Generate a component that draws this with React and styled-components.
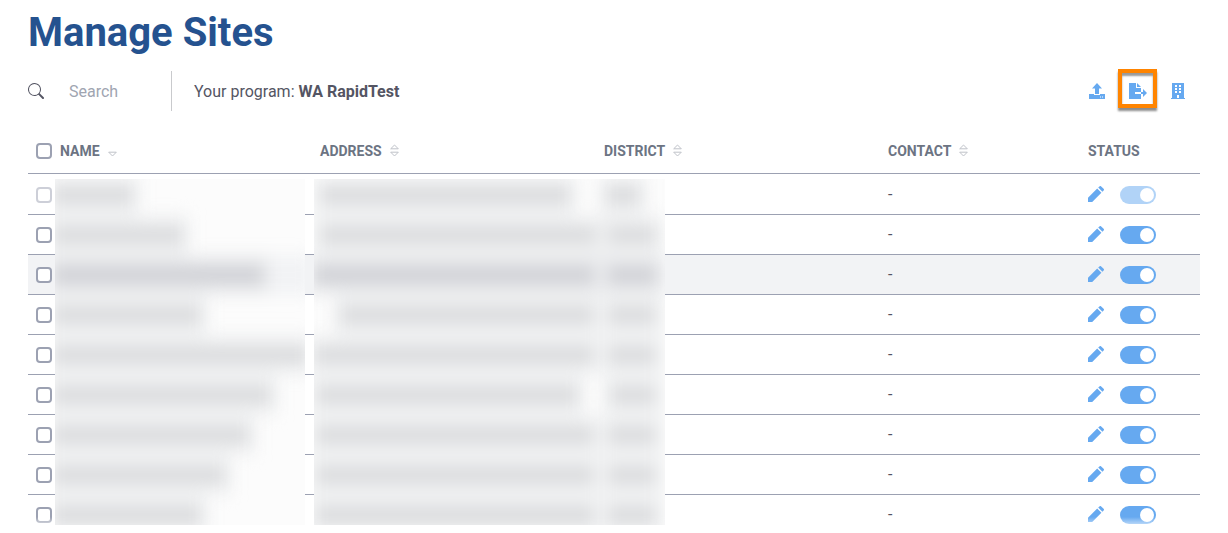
import React from "react";
import styled, { createGlobalStyle, css } from "styled-components";
import { BsSearch } from "react-icons/bs";

const GlobalStyle = createGlobalStyle`
  *, *::before, *::after { box-sizing: border-box; }
  body {
    margin: 0;
    background: #ffffff;
    color: #545563;
    font-family: Roboto, "Liberation Sans", sans-serif;
    font-size: 16px;
  }
`;

const Page = styled.main`
  display: flex;
  flex-direction: column;
  height: 100vh;
  padding: 8px 28px;
`;

const Title = styled.h1`
  margin: 0;
  color: #25528f;
  font-size: 40px;
  font-weight: 700;
  line-height: 50px;
`;

const Toolbar = styled.div`
  display: flex;
  align-items: center;
  height: 40px;
  margin-top: 13px;
`;

const SearchBox = styled.label`
  display: flex;
  align-items: center;
  gap: 25px;
  width: 144px;
  height: 40px;
  border-right: 1px solid #c9cacd;
  svg { flex: none; }
`;

const SearchInput = styled.input`
  min-width: 0;
  width: 80px;
  padding: 0;
  border: 0;
  outline: 0;
  background: transparent;
  color: inherit;
  font: inherit;
  &::placeholder { color: #a0a5b1; opacity: 1; }
`;

const Program = styled.p`
  margin: 0 auto 0 22px;
  padding-top: 2px;
  line-height: 24px;
`;

const Actions = styled.div`
  display: flex;
  align-items: center;
  gap: 24px;
  padding-right: 15px;
`;

const IconButton = styled.button`
  position: relative;
  display: flex;
  padding: 0;
  border: 0;
  background: transparent;
  color: #66a9f0;
  cursor: pointer;
  ${(p) =>
    p.$marked &&
    css`
      &::after {
        content: "";
        position: absolute;
        top: -14px;
        left: -11px;
        width: 39px;
        height: 39px;
        border: 4px solid #ff8400;
        box-shadow: 0 3px 2px rgba(0, 0, 0, 0.45), inset 0 3px 2px rgba(0, 0, 0, 0.4);
      }
    `}
`;

const ListArea = styled.div`
  position: relative;
  flex: 1;
  min-height: 0;
  margin-top: 17px;
  overflow: hidden;
  &::after {
    content: "";
    position: absolute;
    inset: auto 0 0;
    height: 8px;
    background: linear-gradient(rgba(255, 255, 255, 0), rgba(255, 255, 255, 0.6));
    pointer-events: none;
  }
`;

const Table = styled.table`
  width: 100%;
  table-layout: fixed;
  border-collapse: separate;
  border-spacing: 0;
`;

const Col = styled.col`
  width: ${(p) => p.$w}px;
`;

const HeadCell = styled.th`
  height: 46px;
  padding: 0 0 0 8px;
  border-bottom: 1px solid #9ca1b2;
  color: #6c7483;
  font-size: 14px;
  font-weight: 700;
  line-height: 16px;
  text-align: left;
`;

const HeadLabel = styled.span`
  display: flex;
  align-items: center;
  gap: 8px;
`;

const Row = styled.tr`
  background: ${(p) => (p.$active ? "#f2f3f5" : "transparent")};
  &:first-child td { border-top: 1px solid transparent; height: 41px; }
`;

const Cell = styled.td`
  height: 40px;
  padding: 0 0 0 8px;
  border-bottom: 1px solid #9ca1b2;
`;

const Checkbox = styled.input.attrs({ type: "checkbox" })`
  appearance: none;
  display: block;
  width: 16px;
  height: 16px;
  margin: 0;
  border: 2px solid #9ca1b2;
  border-radius: 4px;
  background: #ffffff;
  &:disabled { opacity: 0.5; }
`;

const StatusGroup = styled.div`
  display: flex;
  align-items: flex-start;
  gap: 16px;
`;

const Toggle = styled.input.attrs({ type: "checkbox", role: "switch" })`
  appearance: none;
  display: flex;
  align-items: center;
  width: 36px;
  height: 18px;
  margin: 0;
  padding: 2px;
  border-radius: 9px;
  background: #c9cdd6;
  &::before {
    content: "";
    width: 14px;
    height: 14px;
    border-radius: 50%;
    background: #ffffff;
  }
  &:checked { justify-content: flex-end; background: #66a9f0; }
  &:disabled { opacity: 0.5; }
`;

const Veil = styled.div`
  position: absolute;
  top: 51px;
  bottom: 0;
  left: ${(p) => p.$left}px;
  width: ${(p) => p.$width}px;
  overflow: hidden;
  background: #fcfcfc;
  z-index: 1;
`;

const VeilRows = styled.div`
  filter: blur(8px);
  margin: -4px -8px 0;
`;

const VeilRow = styled.div`
  display: flex;
  height: 40px;
  background: ${(p) => (p.$active ? "#f2f3f5" : "transparent")};
`;

const VeilText = styled.div`
  display: flex;
  align-items: center;
  width: ${(p) => p.$w}px;
  height: 40px;
  margin-left: ${(p) => p.$gap || 0}px;
  padding: 0 6px;
  background: ${(p) => (p.$active ? "#e9eaec" : "#eff0f1")};
  &::before {
    content: "";
    flex: 1;
    height: 16px;
    border-radius: 4px;
    background: ${(p) => (p.$active ? "#cfd0d5" : "#dadbdd")};
  }
`;

const sites = [
  { name: 92, address: [8, 262], district: [24, 46], disabled: true },
  { name: 142, address: [8, 288], district: [0, 60] },
  { name: 222, address: [2, 292], district: [2, 60], active: true },
  { name: 160, address: [28, 266], district: [2, 60] },
  { name: 270, address: [2, 292], district: [2, 60] },
  { name: 230, address: [4, 274], district: [20, 58] },
  { name: 208, address: [4, 290], district: [2, 60] },
  { name: 184, address: [4, 290], district: [2, 60] },
  { name: 160, address: [4, 290], district: [2, 60] },
];

const SortIcon = ({ down }) => (
  <svg width="9" height="13" viewBox="0 0 9 13" fill="none" stroke="#bfc2c9" strokeLinejoin="round" aria-hidden="true">
    {!down && <path d="M.7 4.8 4.5 1 8.3 4.8Z" />}
    <path d="M.7 8.2h7.6L4.5 12Z" />
  </svg>
);

const PencilIcon = () => (
  <svg width="16" height="16" viewBox="0 0 16 16" fill="currentColor" aria-hidden="true">
    <path d="M0 16v-4.2L9.2 2.6l4.2 4.2L4.2 16ZM10.2 1.6l1.2-1.2a1.3 1.3 0 0 1 1.8 0l2.4 2.4a1.3 1.3 0 0 1 0 1.8l-1.2 1.2Z" />
  </svg>
);

const UploadIcon = () => (
  <svg width="16" height="16" viewBox="0 0 16 16" fill="currentColor" aria-hidden="true">
    <path d="M8 0l5 5.4h-3V11H6V5.4H3Z" />
    <path fillRule="evenodd" d="M0 11h5v1h6v-1h5v5H0ZM11 13.4v1h1v-1ZM13 13.4v1h1v-1Z" />
  </svg>
);

const ExportIcon = () => (
  <svg width="18" height="16" viewBox="0 0 18 16" fill="currentColor" aria-hidden="true">
    <path d="M0 0h7v5h5v4H6v2h6v5H0Z" />
    <path d="M8 0l4 4H8Z" />
    <path d="M12 9h2V6l4 4-4 4v-3h-2Z" />
  </svg>
);

const OfficeIcon = () => (
  <svg width="14" height="16" viewBox="0 0 14 16" fill="currentColor" fillRule="evenodd" aria-hidden="true">
    <path d="M1 0h12v15h1v1H0v-1h1ZM4 2v2h2V2ZM8 2v2h2V2ZM4 5v2h2V5ZM8 5v2h2V5ZM4 8v2h2V8ZM8 8v2h2V8ZM6 12v3h2v-3Z" />
  </svg>
);

const columns = [
  { label: "NAME", sort: "down" },
  { label: "ADDRESS", sort: "both" },
  { label: "DISTRICT", sort: "both" },
  { label: "CONTACT", sort: "both" },
  { label: "STATUS" },
];

export default function App() {
  return (
    <>
      <GlobalStyle />
      <Page>
        <Title>Manage Sites</Title>
        <Toolbar>
          <SearchBox>
            <BsSearch size={16} aria-hidden="true" />
            <SearchInput type="search" placeholder="Search" aria-label="Search" />
          </SearchBox>
          <Program>
            Your program: <strong>WA RapidTest</strong>
          </Program>
          <Actions>
            <IconButton type="button" aria-label="Upload sites"><UploadIcon /></IconButton>
            <IconButton type="button" aria-label="Export sites" $marked><ExportIcon /></IconButton>
            <IconButton type="button" aria-label="Add site"><OfficeIcon /></IconButton>
          </Actions>
        </Toolbar>
        <ListArea>
          <Table>
            <colgroup>
              <Col $w={24} />
              <Col $w={260} />
              <Col $w={284} />
              <Col $w={284} />
              <Col $w={200} />
              <Col $w={120} />
            </colgroup>
            <thead>
              <tr>
                <HeadCell scope="col"><Checkbox aria-label="Select all sites" /></HeadCell>
                {columns.map((c) => (
                  <HeadCell key={c.label} scope="col">
                    <HeadLabel>
                      {c.label}
                      {c.sort && <SortIcon down={c.sort === "down"} />}
                    </HeadLabel>
                  </HeadCell>
                ))}
              </tr>
            </thead>
            <tbody>
              {sites.map((s, i) => (
                <Row key={i} $active={s.active}>
                  <Cell><Checkbox disabled={s.disabled} aria-label={`Select site ${i + 1}`} /></Cell>
                  <Cell />
                  <Cell />
                  <Cell />
                  <Cell>-</Cell>
                  <Cell>
                    <StatusGroup>
                      <IconButton type="button" aria-label={`Edit site ${i + 1}`}><PencilIcon /></IconButton>
                      <Toggle defaultChecked disabled={s.disabled} aria-label={`Site ${i + 1} active`} />
                    </StatusGroup>
                  </Cell>
                </Row>
              ))}
            </tbody>
          </Table>
          <Veil $left={27} $width={250} aria-hidden="true">
            <VeilRows>
              {sites.map((s, i) => (
                <VeilRow key={i} $active={s.active}>
                  <VeilText $w={s.name} $active={s.active} />
                </VeilRow>
              ))}
            </VeilRows>
          </Veil>
          <Veil $left={286} $width={351} aria-hidden="true">
            <VeilRows>
              {sites.map((s, i) => (
                <VeilRow key={i} $active={s.active}>
                  <VeilText $gap={s.address[0]} $w={s.address[1]} $active={s.active} />
                  <VeilText $gap={s.district[0]} $w={s.district[1]} $active={s.active} />
                </VeilRow>
              ))}
            </VeilRows>
          </Veil>
        </ListArea>
      </Page>
    </>
  );
}
